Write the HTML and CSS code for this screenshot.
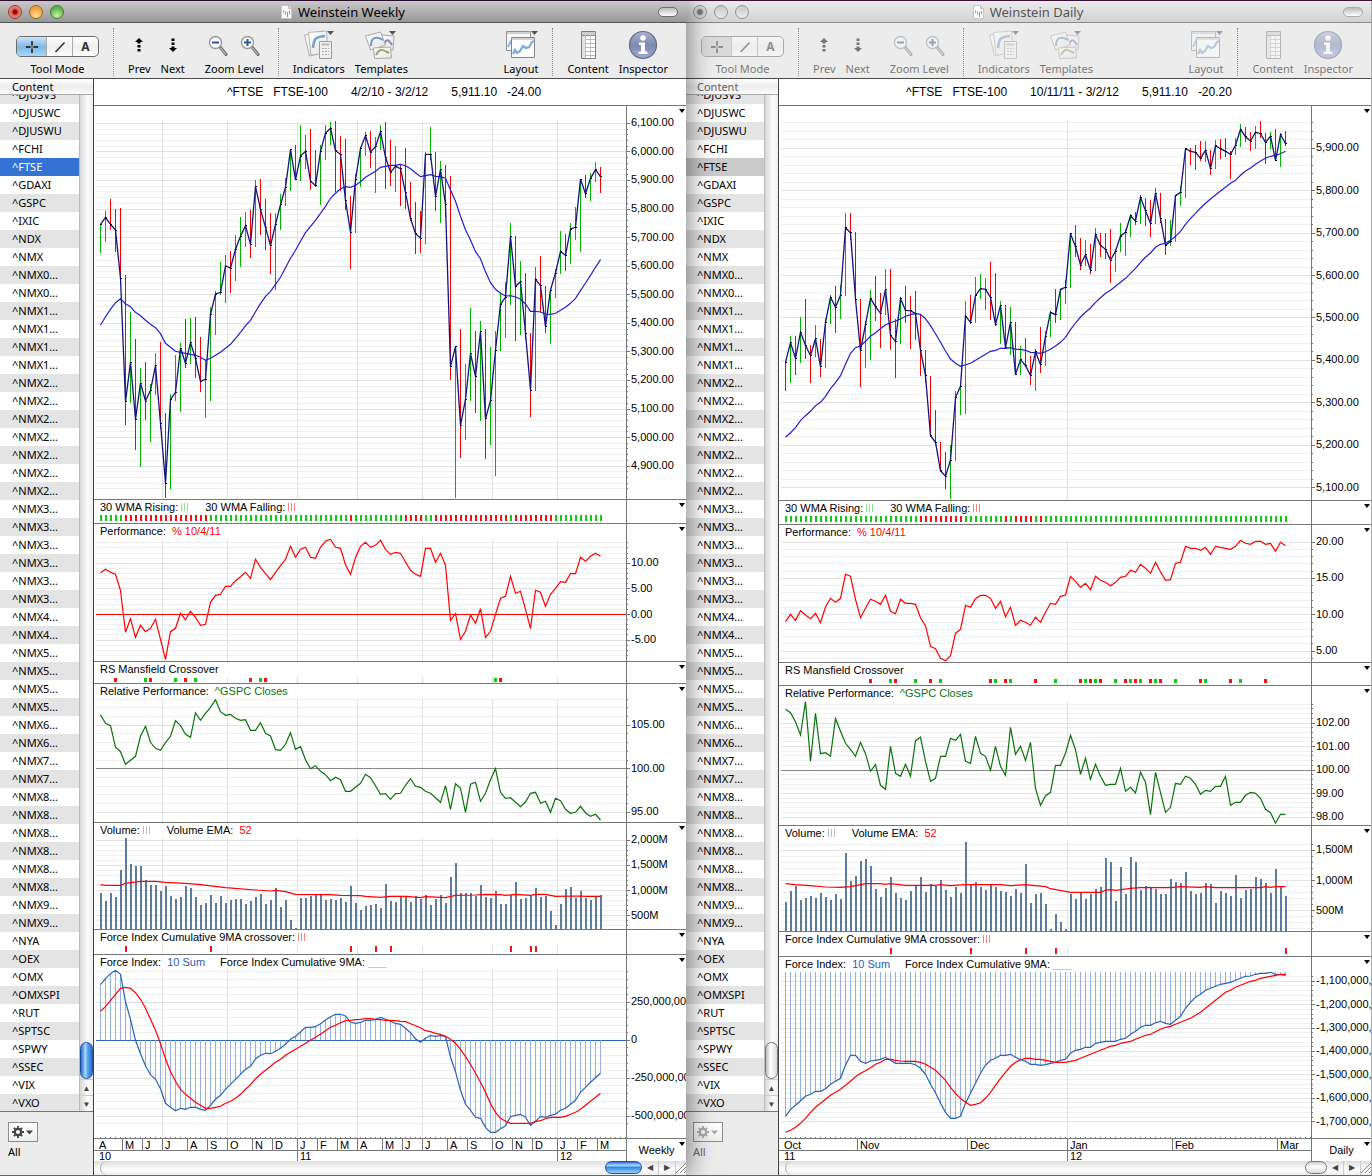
FILE: index.html
```
<!DOCTYPE html>
<html lang="en">

<head>
    <meta charset="UTF-8">
    <meta name="viewport" content="width=device-width, initial-scale=1.0">
    <title>Weinstein Weekly</title>
    <link rel="stylesheet" href="styles.css">
</head>

<body>

    <!-- shared icons -->
    <svg class="defs" aria-hidden="true">
        <defs>
            <linearGradient id="g-info" x1="0" y1="0" x2="0" y2="1">
                <stop offset="0" stop-color="#a9b4d6" />
                <stop offset="0.5" stop-color="#7c89b2" />
                <stop offset="1" stop-color="#9dabd6" />
            </linearGradient>
            <linearGradient id="g-paper" x1="0" y1="0" x2="1" y2="1">
                <stop offset="0" stop-color="#fff" />
                <stop offset="1" stop-color="#e4e4e4" />
            </linearGradient>
        </defs>
        <symbol id="i-doc" viewBox="0 0 11 14">
            <path d="M.5.5h7l3 3v10H.5z" fill="#fafafa" stroke="#c5c5c5" />
            <path d="M7.5.5v3h3" fill="#ddd" stroke="#bbb" />
            <path d="M2.5 5v3M4.5 6v4" stroke="#e59aa0" />
            <path d="M6.5 7v5M8.5 6v3" stroke="#8d93b8" />
        </symbol>
        <symbol id="i-cross" viewBox="0 0 14 14">
            <path d="M7 1v4.500M7 8.500V13M1 7h4.500M8.500 7H13" stroke="currentColor" stroke-width="1.800" />
            <path d="M7 5.500v3M5.500 7h3" stroke="currentColor" stroke-width=".8" opacity=".6" />
        </symbol>
        <symbol id="i-line" viewBox="0 0 14 14">
            <path d="M2.500 12L11.500 2.500" stroke="currentColor" stroke-width="1.600" />
        </symbol>
        <symbol id="i-prev" viewBox="0 0 10 16">
            <path d="M5 1L9 5H1z" fill="currentColor" />
            <path d="M3.500 5h3v1.500h-3zM3.500 8h3v2.500h-3zM3.500 12h3v2.500h-3z" fill="currentColor" />
        </symbol>
        <symbol id="i-next" viewBox="0 0 10 16">
            <path d="M5 15L1 11h8z" fill="currentColor" />
            <path d="M3.500 9.500h3V11h-3zM3.500 5.500h3V8h-3zM3.500 1.500h3V4h-3z" fill="currentColor" />
        </symbol>
        <symbol id="i-zoomout" viewBox="0 0 20 24">
            <path d="M12 13l6 7.500" stroke="#666" stroke-width="3" stroke-linecap="round" />
            <path d="M12.500 14l5 6" stroke="#a9b7c8" stroke-width="1.400" stroke-linecap="round" />
            <circle cx="7.500" cy="8.500" r="6" fill="#f6f9fc" stroke="#9a9a9a" stroke-width="1.400" />
            <path d="M4 8.500h7" stroke="#35588f" stroke-width="2" />
        </symbol>
        <symbol id="i-zoomin" viewBox="0 0 20 24">
            <path d="M12 13l6 7.500" stroke="#666" stroke-width="3" stroke-linecap="round" />
            <path d="M12.500 14l5 6" stroke="#a9b7c8" stroke-width="1.400" stroke-linecap="round" />
            <circle cx="7.500" cy="8.500" r="6" fill="#f6f9fc" stroke="#9a9a9a" stroke-width="1.400" />
            <path d="M4 8.500h7M7.500 5v7" stroke="#35588f" stroke-width="2" />
        </symbol>
        <symbol id="i-indicators" viewBox="0 0 34 32">
            <path d="M2.500 6l18-4 5 21-18 4z" fill="url(#g-paper)" stroke="#b0b0b0" />
            <path d="M6.500 3.500l18-1.500 1.500 22-17 2z" fill="url(#g-paper)" stroke="#b5b5b5" />
            <path d="M11 19c1-8 1-11 12-12" fill="none" stroke="#7ba3cd" stroke-width="2.600" />
            <path d="M17.500 12.500h12v17h-12z" fill="#f1f1f1" stroke="#9c9c9c" />
            <path d="M19.500 15.500h8" stroke="#bbb" stroke-width="2" />
            <path d="M20 19.500h7M20 22.500h7M20 25.500h7" stroke="#aaa" stroke-dasharray="2 1" />
            <path d="M25 2h7l-3.500 4z" fill="#555" />
        </symbol>
        <symbol id="i-templates" viewBox="0 0 34 32">
            <path d="M18 6l12 1-1 14-13-1z" fill="url(#g-paper)" stroke="#aaa" />
            <path d="M20 15c3-6 5-4 8 1" fill="none" stroke="#9a7bbd" stroke-width="2" />
            <path d="M1.500 7l15-4 5 13-15 5z" fill="url(#g-paper)" stroke="#aaa" />
            <path d="M7 17c0-9 5-10 12-6" fill="none" stroke="#6c9cc9" stroke-width="2" />
            <path d="M9.500 19l17-1 1 11-17 .5z" fill="url(#g-paper)" stroke="#aaa" />
            <path d="M12 26c4-8 7-5 13-2" fill="none" stroke="#8fa873" stroke-width="2" />
            <path d="M25 2h7l-3.500 4z" fill="#555" />
        </symbol>
        <symbol id="i-layout" viewBox="0 0 34 32">
            <path d="M2.500 2.500h24v19h-24z" fill="#f4f6f8" stroke="#909090" />
            <path d="M2 4h25" stroke="#aaa" />
            <path d="M4 18l3-6 3 3" fill="none" stroke="#8db5dd" stroke-width="2" />
            <path d="M7.500 8.500h23v20h-23z" fill="#fbfcfd" stroke="#858585" />
            <path d="M7 10h24" stroke="#aaa" />
            <path d="M9 25l2-4 2 3 3-2 3-5 3 2 3-1 3-5 2-1" fill="none" stroke="#7fabd9" stroke-width="2.200" />
            <path d="M27 2h7l-3.500 4z" fill="#555" />
        </symbol>
        <symbol id="i-content" viewBox="0 0 17 30">
            <path d="M1.500 1.500h14v27h-14z" fill="#fff" stroke="#7f7f7f" />
            <path d="M2 2h13v3H2z" fill="#cfcfcf" />
            <path d="M1 5.500h15" stroke="#8a8a8a" />
            <path d="M2 6h3v22H2z" fill="#e3e3e3" />
            <path d="M5.500 5v23M10.500 5v23" stroke="#c4c4c4" />
            <path d="M5 9.500h10M5 13.500h10M5 17.500h10M5 21.500h10M5 25.500h10" stroke="#bbb" />
        </symbol>
        <symbol id="i-info" viewBox="0 0 30 30">
            <circle cx="15" cy="15" r="13.500" fill="url(#g-info)" stroke="#666d85" stroke-width="1.200" />
            <circle cx="15" cy="8" r="2.800" fill="#fff" />
            <path d="M11 12.500h6v9h2.500v2.500h-9V21.500H13V15h-2z" fill="#fff" />
        </symbol>
        <symbol id="i-gear" viewBox="0 0 24 14">
            <circle cx="7" cy="7" r="3.200" fill="none" stroke="currentColor" stroke-width="2.200" />
            <path d="M7 1v2.500M7 10.500V13M1 7h2.500M10.500 7H13M2.800 2.800l1.700 1.700M9.500 9.500l1.700 1.700M2.800 11.200l1.700-1.700M9.500 4.500l1.700-1.700" stroke="currentColor" stroke-width="1.800" />
            <path d="M15 5.500h7l-3.500 4z" fill="currentColor" />
        </symbol>
    </svg>

    <main class="desktop">
        <section class="window active" data-chart="weekly">
            <header class="titlebar">
                <div class="lights">
                    <button class="light red" aria-label="Close"></button>
                    <button class="light yellow" aria-label="Minimize"></button>
                    <button class="light green" aria-label="Zoom"></button>
                </div>
                <h1><svg width="11" height="14"><use href="#i-doc" /></svg>Weinstein Weekly</h1>
                <button class="pill" aria-label="Toggle toolbar"></button>
            </header>
        </section>

        <section class="window inactive" data-chart="daily">
            <header class="titlebar">
                <div class="lights">
                    <button class="light red" aria-label="Close"></button>
                    <button class="light yellow" aria-label="Minimize"></button>
                    <button class="light green" aria-label="Zoom"></button>
                </div>
                <h1><svg width="11" height="14"><use href="#i-doc" /></svg>Weinstein Daily</h1>
                <button class="pill" aria-label="Toggle toolbar"></button>
            </header>
        </section>
    </main>

    <!-- everything under the title bar is the same in both windows -->
    <template id="window-body">
        <nav class="toolbar">
            <div class="tool">
                <div class="tool-icons segmented">
                    <button class="on" aria-label="Crosshair"><svg width="14" height="14"><use href="#i-cross" /></svg></button>
                    <button aria-label="Line"><svg width="14" height="14"><use href="#i-line" /></svg></button>
                    <button>A</button>
                </div>
                <span>Tool Mode</span>
            </div>
            <i class="sep"></i>
            <button class="tool">
                <span class="tool-icons"><svg width="10" height="16"><use href="#i-prev" /></svg></span>
                <span>Prev</span>
            </button>
            <button class="tool">
                <span class="tool-icons"><svg width="10" height="16"><use href="#i-next" /></svg></span>
                <span>Next</span>
            </button>
            <div class="tool zoom">
                <div class="tool-icons">
                    <button aria-label="Zoom out"><svg width="20" height="24"><use href="#i-zoomout" /></svg></button>
                    <button aria-label="Zoom in"><svg width="20" height="24"><use href="#i-zoomin" /></svg></button>
                </div>
                <span>Zoom Level</span>
            </div>
            <i class="sep"></i>
            <button class="tool">
                <span class="tool-icons"><svg width="34" height="32"><use href="#i-indicators" /></svg></span>
                <span>Indicators</span>
            </button>
            <button class="tool">
                <span class="tool-icons"><svg width="34" height="32"><use href="#i-templates" /></svg></span>
                <span>Templates</span>
            </button>
            <button class="tool push">
                <span class="tool-icons"><svg width="34" height="32"><use href="#i-layout" /></svg></span>
                <span>Layout</span>
            </button>
            <i class="sep"></i>
            <button class="tool">
                <span class="tool-icons"><svg width="17" height="30"><use href="#i-content" /></svg></span>
                <span>Content</span>
            </button>
            <button class="tool">
                <span class="tool-icons"><svg width="30" height="30"><use href="#i-info" /></svg></span>
                <span>Inspector</span>
            </button>
        </nav>

        <div class="content">
            <aside class="sidebar">
                <div class="sidebar-head">Content</div>
                <div class="sidebar-list">
                    <ul class="symbols"></ul>
                    <div class="vscroll">
                        <div class="thumb"></div>
                        <button aria-label="Scroll up">▲</button>
                        <button aria-label="Scroll down">▼</button>
                    </div>
                </div>
                <div class="sidebar-foot">
                    <button class="gear" aria-label="Actions"><svg width="24" height="14"><use href="#i-gear" /></svg></button>
                    <span>All</span>
                </div>
            </aside>
            <div class="chart">
                <div class="quote"></div>
                <div class="panes"></div>
                <div class="timeline">
                    <svg class="dates" width="100%" height="22"></svg>
                    <button class="period"></button>
                </div>
                <div class="hscroll">
                    <div class="track"><div class="thumb"></div></div>
                    <button aria-label="Scroll left">◀</button>
                    <button aria-label="Scroll right">▶</button>
                    <svg class="grip" width="10" height="13"><path d="M0 12L10 2M4 12l6-6M8 12l2-2" stroke="#888" /></svg>
                </div>
            </div>
        </div>
    </template>

    <script src="chart.js"></script>
</body>

</html>
```
FILE: styles.css
```
* {
    box-sizing: border-box;
}

body {
    margin: 0;
    background-color: #3a1038;
    font-family: "Lucida Grande", "Noto Sans", sans-serif;
    font-size: 11px;
    color: #000;
}

button {
    padding: 0;
    border: none;
    background: none;
    color: inherit;
    font: inherit;
}

svg {
    display: block;
}

.defs {
    position: absolute;
    width: 0;
    height: 0;
}

.desktop {
    display: grid;
    grid-template-columns: 1fr 1fr;
    min-height: 100vh;
    padding-top: 1px;
    overflow: hidden;
}

.window {
    display: flex;
    flex-direction: column;
    min-width: 0;
    background: #ececec;
    border-bottom: 1px solid #666;
}

.active {
    position: relative;
    z-index: 1;
    box-shadow: 2px 0 24px rgba(0, 0, 0, 0.5);
}

.inactive {
    margin-left: -1px;
    border-right: 1px solid #aaa;
}

/* title bar */
.titlebar {
    display: grid;
    grid-template-columns: 80px 1fr 80px;
    align-items: center;
    height: 22px;
    padding: 0 8px 0 8px;
    background: linear-gradient(#c9c9c9, #979797);
    border-bottom: 1px solid #515151;
}

.inactive .titlebar {
    background: linear-gradient(#ebebeb, #d2d2d2);
    border-bottom-color: #8a8a8a;
    color: #555;
}

.titlebar h1 {
    display: flex;
    justify-content: center;
    align-items: center;
    gap: 6px;
    margin: 0;
    font-size: 13px;
    font-weight: normal;
    line-height: 20px;
}

.lights {
    display: flex;
    gap: 7px;
}

.light {
    width: 14px;
    height: 14px;
    border: 1px solid #666;
    border-radius: 50%;
}

.red {
    background: radial-gradient(circle at 50% 50%, #8a1010 0 2px, #e2544c 3px, #f5a29b 7px);
    border-color: #8a3a36;
}

.yellow {
    background: radial-gradient(circle at 50% 80%, #ffe28a, #ee9c3a 8px);
    border-color: #9a6a2c;
}

.green {
    background: radial-gradient(circle at 50% 80%, #c5f2a0, #5cb14c 8px);
    border-color: #47793c;
}

.inactive .light {
    background: linear-gradient(#c9c9c9, #ececec);
    border-color: #959595;
}

.inactive .red {
    background: radial-gradient(circle at 50% 50%, #777 0 2px, #d6d6d6 4px);
}

.pill {
    justify-self: end;
    width: 20px;
    height: 10px;
    border: 1px solid #6e6e6e;
    border-radius: 5px;
    background: linear-gradient(#bbb, #fff);
}

.inactive .pill {
    border-color: #aaa;
}

/* toolbar */
.toolbar {
    display: flex;
    align-items: stretch;
    gap: 10px;
    height: 56px;
    padding: 5px 18px 2px 16px;
    border-bottom: 1px solid #4a4a4a;
}

.tool {
    display: flex;
    flex-direction: column;
    align-items: center;
    line-height: 14px;
    white-space: nowrap;
}

.tool-icons {
    display: flex;
    align-items: center;
    justify-content: center;
    gap: 12px;
    height: 34px;
    margin-bottom: 1px;
}

.inactive .toolbar .tool {
    opacity: 0.5;
}

.zoom {
    margin-left: 10px;
}

.zoom .tool-icons {
    padding-top: 2px;
}

.push {
    margin-left: auto;
}

.sep {
    margin: 0 4px;
    border-left: 1px dotted #888;
}

.segmented {
    gap: 0;
    width: 83px;
    height: 22px;
    margin: 8px 0 5px;
    border: 1px solid #6b6b6b;
    border-radius: 5px;
    background: linear-gradient(#fff, #efefef 50%, #fdfdfd);
    overflow: hidden;
}

.segmented button {
    display: flex;
    flex: 1;
    align-items: center;
    justify-content: center;
    height: 20px;
    border-left: 1px solid #aaa;
    font-size: 12px;
    font-weight: bold;
    color: #333;
}

.segmented .on {
    flex: 0 0 29px;
    border-left: none;
    background: linear-gradient(#cfe4f8, #7fb7ea 50%, #a9dbfb);
}

.inactive .segmented .on {
    background: #c9c9c9;
}

/* sidebar */
.content {
    display: flex;
    flex: 1;
}

.sidebar {
    display: flex;
    flex: 0 0 94px;
    flex-direction: column;
    border-right: 1px solid #444;
}

.sidebar-head {
    height: 16px;
    padding-left: 12px;
    border-bottom: 1px solid #aaa;
    background: linear-gradient(#fff, #ededed 50%, #fafafa);
    line-height: 16px;
}

.inactive .sidebar-head,
.inactive .sidebar-foot {
    color: #666;
}

.sidebar-list {
    display: flex;
    overflow: hidden;
    border-bottom: 1px solid #777;
}

/* the list is scrolled by half a row */
.symbols {
    flex: 1;
    margin: -9px 0 0;
    padding: 0;
    list-style: none;
    background: #fff;
}

.symbols li {
    height: 18px;
    padding-left: 12px;
    line-height: 18px;
}

.symbols li:last-child {
    height: 17px;
}

.symbols li:nth-child(odd) {
    background: #e4e4e4;
}

.symbols .selected,
.symbols .selected:nth-child(odd) {
    background: #3472d3;
    color: #fff;
}

.inactive .symbols .selected {
    background: #cacaca;
    color: #000;
}

.vscroll {
    display: flex;
    flex: 0 0 14px;
    flex-direction: column;
    justify-content: flex-end;
    border-left: 1px solid #bbb;
    background: linear-gradient(to right, #d8d8d8, #fbfbfb 60%, #eee);
}

.vscroll button {
    height: 16px;
    border-top: 1px solid #ccc;
    color: #444;
    font-size: 8px;
    line-height: 13px;
}

.thumb {
    border: 1px solid #1d4ea3;
    border-radius: 7px;
    background: linear-gradient(to right, #2f6fd0, #a6d8fb 40%, #5aa5ec 60%, #2b6cd2);
}

.vscroll .thumb {
    height: 37px;
}

.hscroll .thumb {
    width: 37px;
    height: 13px;
    margin-left: auto;
    background: linear-gradient(#2f6fd0, #a6d8fb 30%, #3c86e0 50%, #8fd8fc);
}

.inactive .thumb {
    border-color: #777;
    background: linear-gradient(to right, #bbb, #fff 40%, #ddd);
}

.inactive .hscroll .thumb {
    width: 22px;
    background: linear-gradient(#ccc, #fff 40%, #ddd);
}

.sidebar-foot {
    padding: 10px 8px 0;
    line-height: 20px;
}

.gear {
    display: flex;
    align-items: center;
    justify-content: center;
    width: 30px;
    height: 20px;
    border: 1px solid #8d8d8d;
    background: linear-gradient(#fff, #eee);
    color: #444;
}

.inactive .gear {
    color: #aaa;
}

/* chart area */
.chart {
    flex: 1;
    min-width: 0;
    background: #fff;
    font-family: Helvetica, "Liberation Sans", sans-serif;
}

.quote {
    display: flex;
    justify-content: center;
    height: 27px;
    padding-right: 12px;
    border-bottom: 1px solid #777;
    font-size: 12px;
    line-height: 26px;
    white-space: pre;
}

.quote span {
    margin-right: 10px;
}

.quote .wide {
    margin-right: 23px;
}

.quote span:last-child {
    margin-right: 0;
}

.pane,
.timeline {
    position: relative;
    display: grid;
    grid-template-columns: minmax(0, 1fr) 60px;
    border-bottom: 1px solid #777;
}

.timeline {
    border-bottom: none;
}

.pane-title {
    display: flex;
    height: 15px;
    padding-left: 6px;
    line-height: 14px;
    white-space: pre;
}

.pane-title span {
    margin-right: 6px;
}

.pane-title .swatch {
    width: 8px;
    height: 8px;
    margin: 3px 16px 0 -3px;
    background: repeating-linear-gradient(to right, currentColor 0 1px, transparent 1px 3px);
    opacity: 0.5;
}

.pane-title .dash {
    margin-left: -3px;
    color: #ff9c9c;
}

.pane-title .next {
    margin-left: 9px;
}

.plot svg {
    overflow: hidden;
}

.scale {
    padding-top: 15px;
    border-left: 1px solid #777;
    overflow: hidden;
}

.scale svg {
    overflow: visible;
}

.pane-menu {
    position: absolute;
    top: 3px;
    right: 1px;
    border: 3px solid transparent;
    border-top: 4px solid #000;
    border-bottom: none;
}

.period {
    border-left: 1px solid #777;
}

.hscroll {
    display: flex;
    height: 14px;
    background: linear-gradient(#dedede, #fcfcfc 60%, #eee);
}

.hscroll .track {
    flex: 1;
    margin-left: 6px;
    border-left: 1px solid #aaa;
    border-radius: 7px 0 0 7px;
}

.hscroll button {
    width: 17px;
    border-right: 1px solid #ccc;
    color: #444;
    font-size: 8px;
    line-height: 14px;
}

/* svg drawing */
text {
    font-size: 11px;
}

.minor {
    stroke: #f0f0f0;
}

.major {
    stroke: #e2e2e2;
}

.tick {
    stroke: #777;
}

.up {
    stroke: #00b400;
}

.down {
    stroke: #fa0000;
}

.close {
    fill: none;
    stroke: #14147d;
    stroke-width: 1.3;
}

.dot {
    fill: #000028;
}

.average {
    fill: none;
    stroke: #2020d0;
    stroke-width: 1.2;
}

.red-line {
    fill: none;
    stroke: #f00;
    stroke-width: 1.2;
}

.green-line {
    fill: none;
    stroke: #0a720a;
    stroke-width: 1.2;
}

.blue-line {
    fill: none;
    stroke: #2a62b4;
    stroke-width: 1.2;
}

.volume {
    fill: #5d7b9a;
}

.force {
    stroke: #93b1dd;
}

.gray-line {
    stroke: #888;
}

.mark-g {
    fill: #10cc10;
}

.mark-r {
    fill: #f01414;
}

.c-red {
    color: #f00;
}

.c-green {
    color: #0a720a;
}

.c-lime {
    color: #10cc10;
}

.c-blue {
    color: #2a5db0;
}

.c-steel {
    color: #5d7b9a;
}
```
FILE: chart.js
```
const SYMBOLS = ['DJUSVS', 'DJUSWC', 'DJUSWU', 'FCHI', 'FTSE', 'GDAXI', 'GSPC', 'IXIC', 'NDX', 'NMX',
    ...[[0, 2], [1, 4], [2, 7], [3, 6], [4, 2], [5, 4], [6, 2], [7, 2], [8, 6], [9, 2]]
        .flatMap(([n, times]) => Array(times).fill('NMX' + n + '…')),
    'NYA', 'OEX', 'OMX', 'OMXSPI', 'RUT', 'SPTSC', 'SPWY', 'SSEC', 'VIX', 'VXO'];

const STEP = 5;      // px between two bars
const FIRST = 6.5;   // x of the first bar

const nums = s => s.trim().split(/[\s,]+/).map(Number);

// series are stored in thirds of a pixel, "base" is the value at the top of the plot
const weekly = {
    quote: ['^FTSE', 'FTSE-100', '4/2/10 - 3/2/12', '5,911.10', '-24.00'],
    period: 'Weekly',
    columns: [68, 133, 203, 263, 328, 398, 463],
    months: [[0, 'A'], [28, 'M'], [48, 'J'], [68, 'J'], [93, 'A'], [113, 'S'], [133, 'O'], [158, 'N'], [178, 'D'],
        [203, 'J'], [223, 'F'], [243, 'M'], [263, 'A'], [288, 'M'], [308, 'J'], [328, 'J'], [353, 'A'], [373, 'S'],
        [398, 'O'], [418, 'N'], [438, 'D'], [463, 'J'], [483, 'F'], [503, 'M']],
    years: [[0, '10'], [203, '11'], [463, '12']],
    panes: [
        {
            height: 378, base: 63,
            grid: { y: 2.3, step: 28.57, top: 0, bottom: 369 },
            labels: ['6,100.00', '6,000.00', '5,900.00', '5,800.00', '5,700.00', '5,600.00', '5,500.00', '5,400.00',
                '5,300.00', '5,200.00', '5,100.00', '5,000.00', '4,900.00'],
            bars: `373-459G 333-426G 297-390R 327-456R 324-535R 525-975R 636-909G 717-1050R 804-1101G 786-960R
                852-1026G 759-885G 726-987R 939-1194R 882-1167G 765-903G 729-936G 657-804R 654-792G 651-834R
                711-876R 780-954G 621-903G 573-705G 486-585G 465-609G 453-579R 405-543G 351-501G 336-441G
                330-474R 240-441G 237-405R 297-450R 339-522R 339-570G 282-390G 234-318G 148-273G 135-240R
                75-243G 105-207G 87-270R 150-261R 135-315G 75-180G 66-135G 63-276R 108-273R 117-330R
                288-507R 222-399G 141-261G 96-168G 93-204R 111-279G 75-150G 66-267R 120-258R 138-276G
                195-318R 144-327R 246-363R 306-462R 333-459R 156-432G 81-180G 156-333R 183-369G 195-350R
                228-840R 740-1194G 687-1074R 792-1020G 624-903G 693-939R 663-963G 687-1077R 741-1035G 693-1128G
                579-753G 546-714G 369-615G 408-723R 483-705G 519-718R 699-951R 501-873G 468-636R 558-699R
                567-732G 507-594G 393-522G 402-513R 369-492G 321-420G 237-456G 225-294R 219-303G 186-246G 201-279R`,
            average: `676 650 628 608 596 611 620 637 647 661 673 683 701 730 742 754 757 760 763 766 772 781 775 766
                757 745 733 715 697 677 661 635 611 589 574 553 532 503 475 451 424 398 379 361 340 319 295 280 266
                260 262 256 245 232 223 214 202 199 196 196 193 197 206 218 230 227 224 229 230 235 270 304 349 389
                420 455 476 515 548 568 580 588 587 591 598 612 634 634 636 642 643 640 631 622 610 595 572 549 526
                502 479`,
            close: `373 352 373 390 535 905 787 958 850 903 871 797 970 1150 898 877 745 790 728 775 844 838 643 582
                577 498 504 448 409 377 433 260 328 382 437 373 314 262 149 239 168 154 243 257 154 99 85 152 163
                301 396 239 145 107 156 140 95 172 217 199 206 278 355 401 414 163 163 289 209 314 800 740 976 898
                761 829 695 956 902 751 612 592 410 559 545 700 870 538 557 680 570 519 454 466 387 382 238 281 235
                209 230`
        },
        {
            height: 8,
            title: '<span>30 WMA Rising:</span><i class="swatch c-lime"></i><span>30 WMA Falling:</span><i class="swatch c-red"></i>',
            marks: { y: 0, w: 2, h: 6, runs: 'G5 R17 G28 R1 G10 R4 G2 R15 G1 R8 G10' }
        },
        {
            height: 122, base: 132,
            title: '<span>Performance:</span><span class="c-red">% 10/4/11</span>',
            grid: { y: 24.3, step: 25.6, top: 0, bottom: 117 },
            labels: ['10.00', '5.00', '0.00', '-5.00'],
            rule: { y: 75, type: 'red-line' },
            line: 'red-line',
            data: `233 223 232 238 287 412 371 427 391 410 400 373 433 493 410 400 355 374 349 367 391 388 322 301
                298 274 274 257 245 232 250 193 217 236 254 232 212 193 154 187 163 157 187 190 157 139 133 157 160
                209 238 188 154 142 157 151 136 163 178 172 175 201 226 238 244 160 160 202 175 211 376 356 433 409
                360 385 341 427 409 358 310 304 244 295 289 343 401 286 292 334 298 280 260 262 236 236 187 199 184
                175 184`
        },
        {
            height: 6,
            title: '<span>RS Mansfield Crossover</span>',
            marks: { y: 1, w: 3, h: 4, at: '3R 9G 10R 15G 17R 19G 30R 32G 33R 79G 80R' }
        },
        {
            height: 123, base: 612,
            title: '<span>Relative Performance:</span><span class="c-green">^GSPC Closes</span>',
            grid: { y: 26.3, step: 43.4, top: 0, bottom: 115 },
            labels: ['105.00', '100.00', '95.00'],
            rule: { y: 69, type: 'gray-line' },
            line: 'green-line',
            data: `659 685 692 757 770 808 796 784 724 694 742 760 766 743 724 677 692 718 727 653 676 655 637 614
                650 661 658 670 676 674 706 706 683 715 723 764 766 748 713 763 755 794 821 812 829 839 857 847 854
                889 889 877 865 838 848 872 898 896 913 896 895 871 851 874 877 889 895 908 922 872 943 866 880 952
                868 862 919 895 854 821 892 910 908 922 935 921 895 892 925 919 952 910 917 943 955 952 934 953 964
                958 975`
        },
        {
            height: 91, base: 54,
            title: '<span>Volume:</span><i class="swatch c-steel"></i><span>Volume EMA:</span><span class="c-red">52</span>',
            grid: { y: 2.3, step: 25.1, top: 0, bottom: 90 },
            labels: ['2,000M', '1,500M', '1,000M', '500M'],
            volume: `218 242 218 230 151 55 133 139 139 179 194 194 212 197 227 236 230 199 205 230 254 248 224 248
                227 248 239 236 236 251 242 230 221 251 239 203 260 239 301 323 233 233 227 224 224 239 236 239 233
                245 197 248 269 257 254 251 263 191 242 245 230 227 245 227 236 224 254 236 224 248 170 130 218 218
                218 227 194 230 233 214 251 251 224 185 236 233 227 203 230 227 272 314 251 206 200 233 214 233 239
                227 224`,
            ema: `0,194 1,196 4,196 5,190 8,184 11,184 13,187 17,190 20,194 25,203 31,210 34,213 35,211 37,215 39,223
                46,224 48,226 52,227 53,229 56,232 58,229 61,229 64,233 65,230 69,233 71,226 75,225 77,223 80,224
                81,226 83,223 86,226 87,223 89,223 91,229 96,228 97,229 100,229`
        },
        {
            height: 9,
            title: '<span>Force Index Cumulative 9MA crossover:</span><i class="swatch c-red"></i>',
            marks: { y: 1, w: 2, h: 6, at: '5R 22R 50R 55R 58R 82R 86R 87R' }
        },
        {
            height: 168, base: 450,
            title: '<span>Force Index:</span><span class="c-blue">10 Sum</span><span class="next">Force Index Cumulative 9MA:</span><span class="dash">___</span>',
            grid: { y: 32.3, step: 38, top: 0, bottom: 155 },
            labels: ['250,000,000', '0', '-250,000,000', '-500,000,000'],
            rule: { y: 70, type: 'blue-line' },
            zero: 661,
            ticks: true,
            line: 'blue-line',
            data: `494 476 461 451 463 545 598 661 701 737 764 778 806 850 862 872 865 868 862 862 868 871 856 838
                826 808 793 778 763 748 739 717 706 700 701 694 685 673 658 649 636 622 622 620 611 600 590 583 583
                588 607 610 607 601 601 598 592 598 604 610 613 625 638 656 667 655 646 649 647 649 712 755 811 853
                871 892 895 922 937 937 926 917 890 886 883 892 916 904 889 892 886 883 871 865 853 841 817 802 787
                773 760`,
            signal: `574 560 541 523 505 502 505 518 538 565 598 631 671 716 755 784 808 823 835 847 856 865 865 862
                859 850 844 835 823 808 794 776 763 751 739 727 718 706 697 688 679 670 661 652 643 632 622 616 608
                602 601 599 598 596 596 598 599 601 601 602 604 605 611 617 623 632 635 640 643 649 658 670 688 710
                733 760 787 817 851 877 895 904 910 910 910 910 910 905 902 896 892 892 892 889 883 877 868 856 844
                832 820`
        }
    ]
};

const daily = {
    quote: ['^FTSE', 'FTSE-100', '10/11/11 - 3/2/12', '5,911.10', '-20.20'],
    period: 'Daily',
    columns: [288],
    months: [[0, 'Oct'], [78, 'Nov'], [188, 'Dec'], [288, 'Jan'], [393, 'Feb'], [498, 'Mar']],
    years: [[0, '11'], [288, '12']],
    panes: [
        {
            height: 379, base: 63,
            grid: { y: 27.3, step: 42.4, top: 0, bottom: 369 },
            labels: ['5,900.00', '5,800.00', '5,700.00', '5,600.00', '5,500.00', '5,400.00', '5,300.00', '5,200.00', '5,100.00'],
            bars: `784-873R 708-849G 708-825R 651-789G 597-777R 735-849R 675-771G 717-831R 654-804G 585-672G
                558-699R 555-657G 339-588G 339-420R 396-600R 597-861R 663-804G 570-780G 528-663R 579-744R
                507-645G 507-750R 657-834R 591-732G 558-669R 588-747R 573-720R 642-828R 750-849R 828-1011R
                930-1026R 1026-1116R 1056-1167R 1035-1197G 873-1083G 859-945G 603-942G 585-672R 531-669G 522-597G
                534-630G 486-660R 519-678R 603-732G 615-747R 621-765G 666-825R 738-825G 714-801R 768-855R
                747-873G 681-819R 693-798G 633-711G 567-669R 568-660G 540-612G 399-564G 375-471R 414-510R
                420-498G 432-522R 384-513G 399-471R 399-477R 387-549R 447-516G 369-456G 387-468G 342-411G
                336-375R 285-372G 294-378R 300-411R 264-372G 279-369R 357-465R 360-438G 288-426G 258-318G
                147-294G 144-195R 135-210R 123-183R 123-186G 150-225R 120-207G 117-177R 114-171R 153-237R
                114-165G 72-141G 81-126R 96-153R 78-147G 63-114R 99-192R 96-147G 87-183R 99-201G 93-138R`,
            average: `1012 998 983 962 947 934 917 907 889 866 848 827 793 760 743 737 724 709 698 686 674 668 663 657
                649 644 641 643 656 677 701 727 753 777 790 799 794 790 781 772 763 754 751 745 745 743 748 748 751
                757 758 760 755 748 738 727 712 689 669 651 637 624 607 593 580 571 559 547 535 520 505 487 472 459
                442 433 430 421 409 394 373 355 340 324 310 297 285 273 262 250 241 226 213 204 193 183 175 169 166
                161 154`,
            close: `787 728 775 697 736 767 716 800 667 592 622 586 383 398 598 752 673 595 620 640 568 706 724 596
                631 632 641 751 827 1007 1027 1112 1129 1081 892 859 648 667 587 566 568 592 674 616 743 667 823 779
                797 826 755 794 709 637 644 568 562 401 440 495 464 511 404 436 448 480 454 408 397 347 363 292 332
                370 280 355 436 424 287 277 146 154 157 175 151 205 137 146 154 163 136 88 110 123 97 101 127 109
                181 104 130`
        },
        {
            height: 8,
            title: '<span>30 WMA Rising:</span><i class="swatch c-lime"></i><span>30 WMA Falling:</span><i class="swatch c-red"></i>',
            marks: { y: 0, w: 2, h: 6, runs: 'G27 R9 G8 R1 G1 R4 G1 R1 G49' }
        },
        {
            height: 122, base: 135,
            title: '<span>Performance:</span><span class="c-red">% 10/4/11</span>',
            grid: { y: 2, step: 36.4, top: 1, bottom: 120 },
            labels: ['20.00', '15.00', '10.00', '5.00'],
            line: 'red-line',
            data: `380 358 376 347 360 371 355 383 336 310 322 310 238 244 313 368 340 313 319 328 301 349 356 313
                325 325 328 368 392 454 461 490 497 482 415 403 331 337 311 301 301 310 340 319 365 337 391 376 382
                391 367 382 352 325 328 304 300 244 259 277 265 284 244 256 262 272 262 247 244 226 232 208 220 235
                202 230 256 254 205 202 154 160 160 166 157 178 154 157 160 163 154 136 145 148 139 139 148 145 169
                142 152`
        },
        {
            height: 7,
            title: '<span>RS Mansfield Crossover</span>',
            marks: {
                y: 1, w: 3, h: 4, at: `17R 21G 22R 26G 29R 31G 41R 42G 44R 45G 50R 54G 59R 60G 61R 62G 63R 66G 68R 69G
                70R 71G 73R 74G 75R 78G 83R 84G 89R 91G 96R`
            }
        },
        {
            height: 124, base: 618,
            title: '<span>Relative Performance:</span><span class="c-green">^GSPC Closes</span>',
            grid: { y: 22, step: 23.5, top: 3, bottom: 117 },
            labels: ['102.00', '101.00', '100.00', '99.00', '98.00'],
            rule: { y: 69, type: 'gray-line' },
            line: 'green-line',
            data: `643 653 680 720 620 799 655 776 773 784 671 709 745 763 784 742 776 829 809 871 883 754 835 844
                808 844 737 727 799 859 850 784 784 730 736 718 799 805 724 775 784 826 754 814 841 697 778 754 796
                742 880 931 902 892 811 811 775 721 764 838 790 853 808 844 871 868 868 820 889 877 894 832 862 959
                832 893 952 937 865 868 844 850 868 898 886 889 874 874 844 931 922 922 901 892 895 910 943 953 985
                958 958`
        },
        {
            height: 90, base: 63,
            title: '<span>Volume:</span><i class="swatch c-steel"></i><span>Volume EMA:</span><span class="c-red">52</span>',
            grid: { y: 9.3, step: 30.2, top: 3, bottom: 90 },
            labels: ['1,500M', '1,000M', '500M'],
            volume: `247 212 197 241 233 227 233 218 230 239 221 236 100 182 167 122 116 139 206 230 203 170 218 233
                239 212 194 170 215 191 197 179 209 230 200 218 65 194 185 200 209 194 200 212 215 227 206 218 133
                248 221 218 251 326 281 305 328 221 236 218 236 221 206 200 113 125 242 140 221 110 125 209 197 203
                206 221 221 178 185 188 155 212 221 218 188 191 248 212 218 227 164 233 209 206 170 178 188 218 146
                200 227`,
            ema: `0,191 2,194 5,197 8,201 11,202 13,200 15,194 16,191 19,191 20,193 21,191 24,196 30,196 31,194 33,197
                36,194 43,194 45,197 48,194 50,197 52,200 53,206 57,217 63,217 64,211 65,209 66,211 69,205 71,203
                77,203 79,200 83,202 84,200 86,203 95,203 96,200 97,202 98,200 100,200`
        },
        {
            height: 9,
            title: '<span>Force Index Cumulative 9MA crossover:</span><i class="swatch c-red"></i>',
            marks: { y: 1, w: 2, h: 6, at: '21R 37R 48R 54R 100R' }
        },
        {
            height: 166, base: 456,
            title: '<span>Force Index:</span><span class="c-blue">10 Sum</span><span class="next">Force Index Cumulative 9MA:</span><span class="dash">___</span>',
            grid: { y: 9.3, step: 23.4, top: 4, bottom: 152 },
            labels: ['-1,100,000,000', '-1,200,000,000', '-1,300,000,000', '-1,400,000,000', '-1,500,000,000',
                '-1,600,000,000', '-1,700,000,000'],
            zero: 456,
            ticks: true,
            line: 'blue-line',
            data: `889 868 856 842 829 823 814 814 806 793 784 775 736 706 706 724 730 723 721 718 712 721 730 730
                730 730 734 745 763 793 818 850 877 895 895 889 850 820 790 760 736 721 715 706 706 703 712 719 724
                733 733 736 734 730 727 721 718 700 691 688 682 682 670 667 664 664 664 658 655 643 634 622 616 616
                608 604 610 613 601 589 565 547 532 523 511 505 499 493 490 487 481 475 469 468 463 460 460 457 463
                464 466`,
            signal: `937 931 922 910 895 877 862 850 838 826 817 808 796 784 770 760 752 743 733 727 718 718 721 723
                724 724 724 727 733 742 751 766 781 802 820 835 847 856 853 848 835 817 796 775 757 739 727 719 715
                715 718 718 721 724 727 727 727 724 721 715 709 703 697 691 685 679 676 670 667 664 658 652 646 643
                635 628 622 619 613 607 601 595 586 577 565 553 541 529 517 511 502 496 490 484 481 475 472 469 466
                463 463`
        }
    ]
};

const charts = { weekly, daily };

function line(cls, x1, y1, x2, y2) {
    return `<line class="${cls}" x1="${x1}" y1="${y1}" x2="${x2}" y2="${y2}"/>`;
}

function rect(cls, x, y, w, h) {
    return `<rect class="${cls}" x="${x}" y="${y}" width="${w}" height="${h}"/>`;
}

function polyline(cls, points) {
    return `<polyline class="${cls}" points="${points.map(p => p[0] + ',' + p[1].toFixed(1)).join(' ')}"/>`;
}

function gridRows(grid) {
    const rows = [];
    for (let k = -20; k < 100; k++) {
        const y = grid.y + k * grid.step / 5;
        if (y >= grid.top && y <= grid.bottom) {
            rows.push({ y: Math.floor(y) + 0.5, major: k % 5 === 0 });
        }
    }
    return rows;
}

function drawMarks(marks) {
    const list = [];
    if (marks.runs) {
        marks.runs.split(' ').forEach(run => {
            for (let n = 0; n < Number(run.slice(1)); n++) list.push([list.length, run[0]]);
        });
    } else {
        marks.at.split(/\s+/).forEach(m => list.push([parseInt(m, 10), m.slice(-1)]));
    }
    return list.map(([i, c]) => rect('mark-' + c.toLowerCase(), 6 + i * STEP - (marks.w > 2 ? 1 : 0), marks.y, marks.w, marks.h)).join('');
}

function drawPlot(pane, columns) {
    const x = i => FIRST + i * STEP;
    const y = v => (v - pane.base) / 3;
    const series = s => nums(s).map((v, i) => [x(i), y(v)]);
    let out = '';

    if (pane.grid) {
        gridRows(pane.grid).forEach(r => out += line(r.major ? 'major' : 'minor', 2, r.y, '100%', r.y));
    }
    columns.forEach(c => out += line('major', c + 0.5, 0, c + 0.5, pane.height));
    if (pane.rule) out += line(pane.rule.type, 2, pane.rule.y + 0.5, '100%', pane.rule.y + 0.5);

    if (pane.bars) {
        pane.bars.trim().split(/\s+/).forEach((b, i) => {
            const [hi, lo] = b.split('-').map(parseFloat);
            out += line(b.endsWith('G') ? 'up' : 'down', x(i), y(hi), x(i), y(lo));
        });
        out += polyline('average', series(pane.average));
        out += polyline('close', series(pane.close));
        series(pane.close).forEach(p => out += rect('dot', p[0] - 0.5, Math.round(p[1] - 0.5), 2, 1));
    }
    if (pane.volume) {
        series(pane.volume).forEach(p => out += rect('volume', p[0] - 0.5, Math.round(p[1]), 2, pane.height));
        const points = pane.ema.trim().split(/\s+/).map(p => p.split(',').map(Number));
        out += polyline('red-line', points.map(([i, v]) => [x(i), y(v)]));
    }
    if (pane.zero) {
        series(pane.data).forEach(p => out += line('force', p[0], y(pane.zero), p[0], p[1]));
    }
    if (pane.data) out += polyline(pane.line, series(pane.data));
    if (pane.signal) out += polyline('red-line', series(pane.signal));
    if (pane.marks) out += drawMarks(pane.marks);
    if (pane.ticks) {
        for (let i = 0; i < 106; i++) out += line('tick', x(i), pane.height - 1, x(i), pane.height);
    }
    return out;
}

function drawScale(pane) {
    if (!pane.grid) return '';
    let out = gridRows(pane.grid).map(r => line('tick', 0, r.y, r.major ? 3 : 1, r.y)).join('');
    pane.labels.forEach((label, i) => {
        out += `<text x="4" y="${Math.round(pane.grid.y + i * pane.grid.step + 3)}">${label}</text>`;
    });
    return out;
}

function drawDates(chart) {
    let out = line('tick', 0, 11.5, '100%', 11.5);
    chart.months.forEach(([x, name]) => {
        if (x) out += line('tick', x + 0.5, 0, x + 0.5, 12);
        out += `<text x="${x ? x + 3 : 5}" y="10">${name}</text>`;
    });
    chart.years.forEach(([x, name]) => {
        if (x) out += line('tick', x + 0.5, 12, x + 0.5, 22);
        out += `<text x="${x ? x + 3 : 5}" y="21">${name}</text>`;
    });
    return out;
}

document.querySelectorAll('.window').forEach(win => {
    const chart = charts[win.dataset.chart];
    win.appendChild(document.getElementById('window-body').content.cloneNode(true));

    win.querySelector('.symbols').innerHTML = SYMBOLS
        .map(s => `<li${s === 'FTSE' ? ' class="selected"' : ''}>^${s}</li>`).join('');

    win.querySelector('.quote').innerHTML = chart.quote
        .map((q, i) => `<span${i === 1 || i === 2 ? ' class="wide"' : ''}>${q}</span>`).join('');

    win.querySelector('.panes').innerHTML = chart.panes.map(pane => `
        <div class="pane">
            <div class="plot">
                <div class="pane-title">${pane.title || ''}</div>
                <svg width="100%" height="${pane.height}">${drawPlot(pane, chart.columns)}</svg>
            </div>
            <div class="scale"><svg width="100%" height="1">${drawScale(pane)}</svg></div>
            <button class="pane-menu" aria-label="Pane menu"></button>
        </div>`).join('');

    win.querySelector('.dates').innerHTML = drawDates(chart);
    win.querySelector('.period').textContent = chart.period;
    win.querySelector('.timeline').insertAdjacentHTML('beforeend', '<button class="pane-menu" aria-label="Period menu"></button>');
});
```
